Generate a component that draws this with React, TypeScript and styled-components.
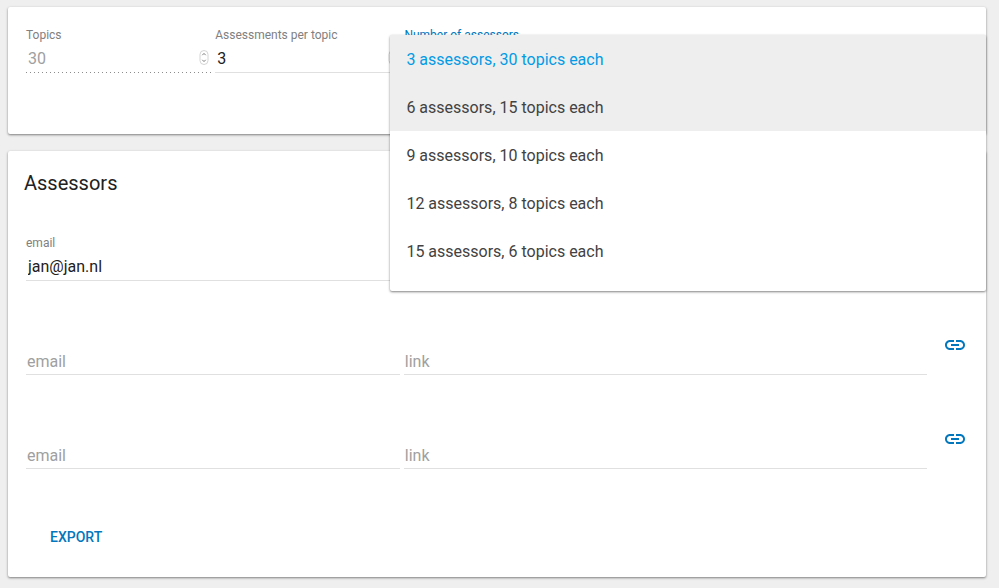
import React, { useId, useState } from "react";
import styled, { createGlobalStyle, css } from "styled-components";

const GlobalStyle = createGlobalStyle`
  *, *::before, *::after { box-sizing: border-box; }
  body {
    margin: 0;
    background: #efefef;
    color: #212121;
    font-family: Roboto, "Liberation Sans", sans-serif;
    font-size: 16px;
  }
  button, input { font: inherit; }
`;

const Page = styled.main`
  display: flex;
  flex-direction: column;
  gap: 17px;
  padding: 7px 13px 10px 8px;
`;

const Card = styled.section`
  background: #fff;
  border-radius: 2px;
  box-shadow: 0 1px 3px rgba(0, 0, 0, 0.24), 0 1px 2px rgba(0, 0, 0, 0.28);
`;

const SettingsRow = styled.form`
  display: grid;
  grid-template-columns: 1fr 1fr 3fr;
  padding: 20px 16px 61px;
`;

const Field = styled.div`
  position: relative;
  display: flex;
  flex-direction: column;
  min-width: 0;
  margin: 0 2px;
`;

const Label = styled.label<{ $active?: boolean }>`
  height: 16px;
  line-height: 16px;
  font-size: 12px;
  color: ${(p) => (p.$active ? "#0277bd" : "#808080")};
`;

const Input = styled.input`
  width: 100%;
  height: 30px;
  padding: 2px 2px 1px;
  border: 0;
  border-bottom: 1px solid #e0e0e0;
  border-radius: 0;
  outline: 0;
  background: transparent;
  color: #212121;
  appearance: textfield;

  &::-webkit-inner-spin-button { appearance: none; margin: 0; }
  &::placeholder { color: #a0a0a0; opacity: 1; }
  &:placeholder-shown { padding: 3px 1px 0; }
  &:disabled {
    color: #a0a0a0;
    border-bottom-color: transparent;
    background: repeating-linear-gradient(to right, #8c8c8c 0 1px, transparent 1px 4px)
      0 100% / 100% 1px no-repeat border-box;
  }
`;

const Stepper = styled.svg`
  position: absolute;
  right: 2px;
  bottom: 8px;
  width: 10px;
  height: 15px;
`;

const SelectTrigger = styled.button`
  height: 30px;
  padding: 2px;
  border: 0;
  border-bottom: 1px solid #e0e0e0;
  background: transparent;
  text-align: left;
  cursor: pointer;
`;

const Menu = styled.ul`
  position: absolute;
  z-index: 2;
  top: 8px;
  left: -14px;
  right: -18px;
  margin: 0;
  padding: 0 0 16px;
  list-style: none;
  background: #fff;
  border-radius: 2px;
  box-shadow: 0 1px 3px rgba(0, 0, 0, 0.24), 0 1px 2px rgba(0, 0, 0, 0.3);
`;

const Option = styled.li<{ $shaded: boolean }>`
  height: 48px;
  padding: 0 16px;
  line-height: 50px;
  color: #424242;
  cursor: pointer;
  ${(p) => p.$shaded && css`background: #eeeeee;`}
  &[aria-selected="true"] { color: #039be5; }
`;

const AssessorsForm = styled.form`
  padding: 20px 5px 22px 16px;
`;

const Title = styled.h2`
  margin: 0 0 40px;
  font-size: 20px;
  line-height: 24px;
  font-weight: 400;
`;

const AssessorRow = styled.div`
  display: grid;
  grid-template-columns: 43fr 60fr 52px;
  height: 94px;
`;

const LinkButton = styled.button`
  display: grid;
  place-items: center;
  width: 40px;
  height: 40px;
  margin: -4px 6px 0;
  padding: 0;
  border: 0;
  background: transparent;
  color: #0277bd;
  cursor: pointer;
`;

const ExportButton = styled.button`
  height: 36px;
  margin: 2px 8px 0;
  padding: 0 18px;
  border: 0;
  background: transparent;
  color: #0277bd;
  font-size: 14px;
  font-weight: 500;
  text-transform: uppercase;
  cursor: pointer;
`;

function NumberField({ label, value, disabled }: { label: string; value: number; disabled?: boolean }) {
  const id = useId();
  return (
    <Field>
      <Label htmlFor={id}>{label}</Label>
      <Input id={id} type="number" defaultValue={value} disabled={disabled} />
      <Stepper viewBox="0 0 10 15" fill="none" aria-hidden="true">
        <rect x="1" y="0.5" width="8" height="14" rx="4" stroke="#d4d4d4" />
        <path d="M3.3 5.2 5 3.4l1.7 1.8M3.3 9.8 5 11.6l1.7-1.8" stroke="#808080" />
      </Stepper>
    </Field>
  );
}

function TextField({ label, value }: { label: string; value?: string }) {
  const id = useId();
  return (
    <Field>
      <Label htmlFor={id}>{value ? label : ""}</Label>
      <Input id={id} aria-label={label} placeholder={label} defaultValue={value} />
    </Field>
  );
}

const choices = [
  "3 assessors, 30 topics each",
  "6 assessors, 15 topics each",
  "9 assessors, 10 topics each",
  "12 assessors, 8 topics each",
  "15 assessors, 6 topics each",
];

function AssessorSelect() {
  const id = useId();
  const [open, setOpen] = useState(true);
  const [selected, setSelected] = useState(0);
  return (
    <Field>
      <Label htmlFor={id} $active>Number of assessors</Label>
      <SelectTrigger id={id} type="button" aria-haspopup="listbox" aria-expanded={open} onClick={() => setOpen(true)}>
        {open ? "" : choices[selected]}
      </SelectTrigger>
      {open && (
        <Menu role="listbox" aria-label="Number of assessors">
          {choices.map((choice, i) => (
            <Option
              key={choice}
              role="option"
              aria-selected={i === selected}
              $shaded={i === selected || i === 1}
              onClick={() => {
                setSelected(i);
                setOpen(false);
              }}
            >
              {choice}
            </Option>
          ))}
        </Menu>
      )}
    </Field>
  );
}

const assessors = [{ email: "jan@jan.nl" }, { email: "" }, { email: "" }];

export default function App() {
  return (
    <>
      <GlobalStyle />
      <Page>
        <Card>
          <SettingsRow>
            <NumberField label="Topics" value={30} disabled />
            <NumberField label="Assessments per topic" value={3} />
            <AssessorSelect />
          </SettingsRow>
        </Card>
        <Card>
          <AssessorsForm>
            <Title>Assessors</Title>
            {assessors.map((assessor, i) => (
              <AssessorRow key={i}>
                <TextField label="email" value={assessor.email} />
                <TextField label="link" />
                <LinkButton type="button" aria-label="Open link">
                  <svg width="24" height="24" viewBox="0 0 24 24" fill="currentColor" aria-hidden="true">
                    <path d="M3.9 12c0-1.71 1.39-3.1 3.1-3.1h4V7H7c-2.76 0-5 2.24-5 5s2.24 5 5 5h4v-1.9H7c-1.71 0-3.1-1.39-3.1-3.1zM8 13h8v-2H8v2zm9-6h-4v1.9h4c1.71 0 3.1 1.39 3.1 3.1s-1.39 3.1-3.1 3.1h-4V17h4c2.76 0 5-2.24 5-5s-2.24-5-5-5z" />
                  </svg>
                </LinkButton>
              </AssessorRow>
            ))}
            <ExportButton type="button">Export</ExportButton>
          </AssessorsForm>
        </Card>
      </Page>
    </>
  );
}
